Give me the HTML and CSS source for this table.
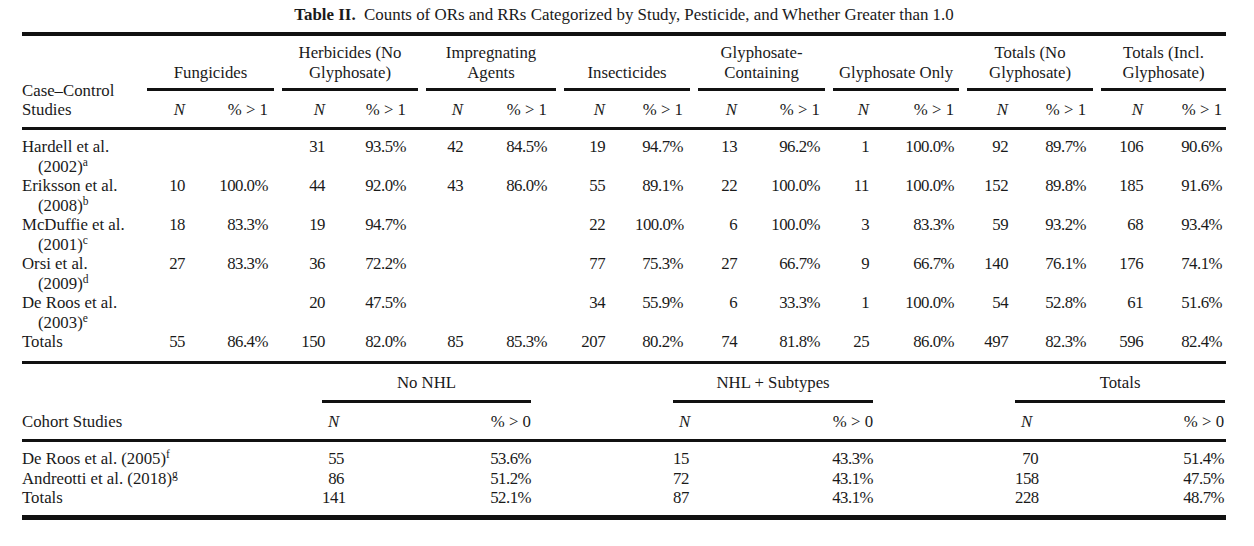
FILE: index.html
```html
<!DOCTYPE html>
<html>
<head>
<meta charset="utf-8">
<title>Table II</title>
<link rel="stylesheet" href="styles.css">
</head>
<body>
<div class="page">
  <p class="title"><b>Table II.</b>&ensp;Counts of ORs and RRs Categorized by Study, Pesticide, and Whether Greater than 1.0</p>

  <table class="cc">
    <colgroup>
      <col style="width:121px">
      <col style="width:72px"><col style="width:63px">
      <col style="width:77px"><col style="width:67px">
      <col style="width:71px"><col style="width:67px">
      <col style="width:75px"><col style="width:59px">
      <col style="width:73px"><col style="width:62px">
      <col style="width:70px"><col style="width:64px">
      <col style="width:75px"><col style="width:59px">
      <col style="width:76px"><col style="width:53px">
    </colgroup>
    <thead>
      <tr class="grp">
        <th rowspan="2" class="lab">Case–Control<br>Studies</th>
        <th colspan="2"><div>Fungicides</div></th>
        <th colspan="2"><div>Herbicides (No<br>Glyphosate)</div></th>
        <th colspan="2"><div>Impregnating<br>Agents</div></th>
        <th colspan="2"><div>Insecticides</div></th>
        <th colspan="2"><div>Glyphosate-<br>Containing</div></th>
        <th colspan="2"><div>Glyphosate Only</div></th>
        <th colspan="2"><div>Totals (No<br>Glyphosate)</div></th>
        <th colspan="2"><div>Totals (Incl.<br>Glyphosate)</div></th>
      </tr>
      <tr class="sub">
        <th><i>N</i></th><th>% &gt; 1</th>
        <th><i>N</i></th><th>% &gt; 1</th>
        <th><i>N</i></th><th>% &gt; 1</th>
        <th><i>N</i></th><th>% &gt; 1</th>
        <th><i>N</i></th><th>% &gt; 1</th>
        <th><i>N</i></th><th>% &gt; 1</th>
        <th><i>N</i></th><th>% &gt; 1</th>
        <th><i>N</i></th><th>% &gt; 1</th>
      </tr>
    </thead>
    <tbody>
      <tr>
        <td class="lab">Hardell et al.<br>(2002)<sup>a</sup></td>
        <td></td><td></td>
        <td>31</td><td>93.5%</td>
        <td>42</td><td>84.5%</td>
        <td>19</td><td>94.7%</td>
        <td>13</td><td>96.2%</td>
        <td>1</td><td>100.0%</td>
        <td>92</td><td>89.7%</td>
        <td>106</td><td>90.6%</td>
      </tr>
      <tr>
        <td class="lab">Eriksson et al.<br>(2008)<sup>b</sup></td>
        <td>10</td><td>100.0%</td>
        <td>44</td><td>92.0%</td>
        <td>43</td><td>86.0%</td>
        <td>55</td><td>89.1%</td>
        <td>22</td><td>100.0%</td>
        <td>11</td><td>100.0%</td>
        <td>152</td><td>89.8%</td>
        <td>185</td><td>91.6%</td>
      </tr>
      <tr>
        <td class="lab">McDuffie et al.<br>(2001)<sup>c</sup></td>
        <td>18</td><td>83.3%</td>
        <td>19</td><td>94.7%</td>
        <td></td><td></td>
        <td>22</td><td>100.0%</td>
        <td>6</td><td>100.0%</td>
        <td>3</td><td>83.3%</td>
        <td>59</td><td>93.2%</td>
        <td>68</td><td>93.4%</td>
      </tr>
      <tr>
        <td class="lab">Orsi et al.<br>(2009)<sup>d</sup></td>
        <td>27</td><td>83.3%</td>
        <td>36</td><td>72.2%</td>
        <td></td><td></td>
        <td>77</td><td>75.3%</td>
        <td>27</td><td>66.7%</td>
        <td>9</td><td>66.7%</td>
        <td>140</td><td>76.1%</td>
        <td>176</td><td>74.1%</td>
      </tr>
      <tr>
        <td class="lab">De Roos et al.<br>(2003)<sup>e</sup></td>
        <td></td><td></td>
        <td>20</td><td>47.5%</td>
        <td></td><td></td>
        <td>34</td><td>55.9%</td>
        <td>6</td><td>33.3%</td>
        <td>1</td><td>100.0%</td>
        <td>54</td><td>52.8%</td>
        <td>61</td><td>51.6%</td>
      </tr>
      <tr>
        <td class="lab">Totals</td>
        <td>55</td><td>86.4%</td>
        <td>150</td><td>82.0%</td>
        <td>85</td><td>85.3%</td>
        <td>207</td><td>80.2%</td>
        <td>74</td><td>81.8%</td>
        <td>25</td><td>86.0%</td>
        <td>497</td><td>82.3%</td>
        <td>596</td><td>82.4%</td>
      </tr>
    </tbody>
  </table>

  <table class="co">
    <colgroup>
      <col style="width:300px">
      <col style="width:22px"><col style="width:187px">
      <col style="width:142px">
      <col style="width:14px"><col style="width:186px">
      <col style="width:142px">
      <col style="width:23px"><col style="width:188px">
    </colgroup>
    <thead>
      <tr class="grp">
        <th rowspan="2" class="lab">Cohort Studies</th>
        <th colspan="2"><div>No NHL</div></th>
        <th class="gap"></th>
        <th colspan="2"><div>NHL + Subtypes</div></th>
        <th class="gap"></th>
        <th colspan="2" class="last"><div>Totals</div></th>
      </tr>
      <tr class="sub">
        <th class="n"><i>N</i></th><th class="p">% &gt; 0</th>
        <th class="gap"></th>
        <th class="n"><i>N</i></th><th class="p">% &gt; 0</th>
        <th class="gap"></th>
        <th class="n"><i>N</i></th><th class="p last">% &gt; 0</th>
      </tr>
    </thead>
    <tbody>
      <tr>
        <td class="lab">De Roos et al. (2005)<sup>f</sup></td>
        <td class="n">55</td><td class="p">53.6%</td><td class="gap"></td>
        <td class="n">15</td><td class="p">43.3%</td><td class="gap"></td>
        <td class="n">70</td><td class="p last">51.4%</td>
      </tr>
      <tr>
        <td class="lab">Andreotti et al. (2018)<sup>g</sup></td>
        <td class="n">86</td><td class="p">51.2%</td><td class="gap"></td>
        <td class="n">72</td><td class="p">43.1%</td><td class="gap"></td>
        <td class="n">158</td><td class="p last">47.5%</td>
      </tr>
      <tr>
        <td class="lab">Totals</td>
        <td class="n">141</td><td class="p">52.1%</td><td class="gap"></td>
        <td class="n">87</td><td class="p">43.1%</td><td class="gap"></td>
        <td class="n">228</td><td class="p last">48.7%</td>
      </tr>
    </tbody>
  </table>
</div>
</body>
</html>
```

FILE: styles.css
```css
html, body {
  margin: 0;
  padding: 0;
  background: #ffffff;
}

body {
  font-family: "Liberation Serif", "Times New Roman", serif;
  font-size: 16.8px;
  line-height: 19.5px;
  color: #1a1a1a;
}

.page {
  padding: 5px 0 0 22px;
}

.title {
  width: 1204px;
  margin: 0 0 7px;
  text-align: center;
  line-height: 20px;
  font-size: 16.9px;
}

.title b {
  font-weight: bold;
}

table {
  border-collapse: separate;
  border-spacing: 0;
  table-layout: fixed;
  width: 1204px;
}

th, td {
  padding: 0;
  font-weight: normal;
}

td {
  letter-spacing: -0.5px;
}

td.lab {
  letter-spacing: 0;
}

sup {
  font-size: 11.5px;
  line-height: 0;
  vertical-align: 6px;
  letter-spacing: 0;
}

/* ---------- Case-control table ---------- */
.cc {
  border-top: 4px solid #111;
  border-bottom: 3px solid #111;
}

.cc .grp th {
  padding: 7px 4px 0;
  text-align: center;
  vertical-align: bottom;
}

.cc .grp th:last-child {
  padding-right: 0;
}

.cc .grp th div {
  border-bottom: 3px solid #111;
  padding-bottom: 6px;
}

.cc .grp th.lab {
  padding: 0 0 7.5px;
  text-align: left;
  vertical-align: bottom;
  border-bottom: 3px solid #111;
}

.cc .sub th {
  padding: 9px 0 7.5px;
  text-align: right;
  border-bottom: 3px solid #111;
}

.cc .sub th:nth-child(odd) {
  padding-right: 30px;
}

.cc tbody td {
  vertical-align: top;
  text-align: right;
}

.cc tbody td:nth-child(even) {
  padding-right: 30px;
}

.cc tbody td.lab {
  text-align: left;
  padding-left: 16px;
  text-indent: -16px;
}

.cc tbody tr:first-child td {
  padding-top: 7px;
}

.cc tbody tr:last-child td {
  padding-bottom: 9.5px;
}

.cc tbody td:nth-child(3), .cc .sub th:nth-child(2) { padding-right: 10px; }
.cc tbody td:nth-child(5), .cc .sub th:nth-child(4) { padding-right: 16px; }
.cc tbody td:nth-child(7), .cc .sub th:nth-child(6) { padding-right: 13px; }
.cc tbody td:nth-child(9), .cc .sub th:nth-child(8) { padding-right: 11px; }
.cc tbody td:nth-child(11), .cc .sub th:nth-child(10) { padding-right: 9px; }
.cc tbody td:nth-child(13), .cc .sub th:nth-child(12) { padding-right: 9px; }
.cc tbody td:nth-child(15), .cc .sub th:nth-child(14) { padding-right: 11px; }
.cc tbody td:nth-child(17), .cc .sub th:nth-child(16) { padding-right: 4px; }

/* ---------- Cohort table ---------- */
.co {
  border-bottom: 5px solid #111;
}

.co .grp th {
  padding: 9px 0 0;
  text-align: center;
  vertical-align: bottom;
}

.co .grp th div {
  border-bottom: 3px solid #111;
  padding-bottom: 7px;
}

.co .grp th.last {
  padding-right: 1px;
}

.co .grp th.lab {
  padding: 0 0 7.5px;
  text-align: left;
  vertical-align: bottom;
  border-bottom: 3px solid #111;
}

.co .sub th {
  padding: 9px 0 7.5px;
  border-bottom: 3px solid #111;
}

.co .sub th.n {
  text-align: left;
  padding-left: 6px;
  white-space: nowrap;
}

.co th.p, .co td.p {
  text-align: right;
}

.co td.n {
  text-align: right;
}

.co .p.last {
  padding-right: 2px;
}

.co tbody td {
  vertical-align: top;
}

.co tbody td.lab {
  text-align: left;
}

.co tbody tr:first-child td {
  padding-top: 7.5px;
}

.co tbody tr:last-child td {
  padding-bottom: 7.5px;
}
```
